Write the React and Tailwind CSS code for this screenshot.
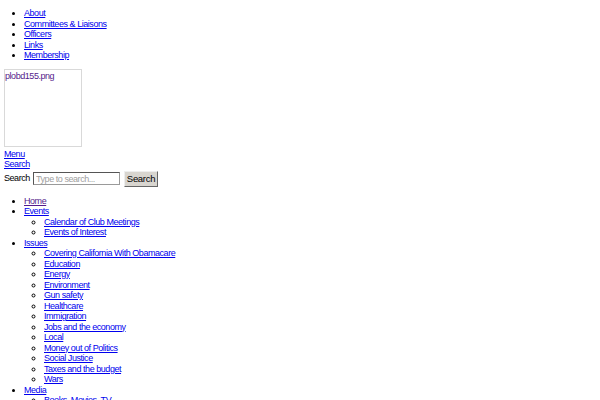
const topLinks = ["About", "Committees & Liaisons", "Officers", "Links", "Membership"];

const nav = [
  { label: "Home", visited: true },
  { label: "Events", children: ["Calendar of Club Meetings", "Events of Interest"] },
  {
    label: "Issues",
    children: [
      "Covering California With Obamacare",
      "Education",
      "Energy",
      "Environment",
      "Gun safety",
      "Healthcare",
      "Immigration",
      "Jobs and the economy",
      "Local",
      "Money out of Politics",
      "Social Justice",
      "Taxes and the budget",
      "Wars",
    ],
  },
  { label: "Media", children: ["Books, Movies, TV"] },
];

function A({ children, visited }) {
  return (
    <a href="#" className={visited ? "text-[#551a8b] underline" : "text-[#0000ee] underline"}>
      {children}
    </a>
  );
}

export default function App() {
  return (
    <div className="px-1 pt-2 bg-white text-black text-[9px] tracking-[-0.45px] leading-[10.5px] font-['Liberation_Sans',Arial,sans-serif] h-[400px] overflow-hidden">
      <ul className="list-disc pl-5">
        {topLinks.map((l) => (
          <li key={l}>
            <A>{l}</A>
          </li>
        ))}
      </ul>
      <div className="mt-[8px] w-[78px] h-[78px] border border-[#d9d9d9] text-[#551a8b] pt-[1px]">
        plobd155.png
      </div>
      <div className="mt-[2px]">
        <A>Menu</A>
      </div>
      <div>
        <A>Search</A>
      </div>
      <form className="flex items-center mt-[1px]" onSubmit={(e) => e.preventDefault()}>
        <label className="w-[29px]">Search</label>
        <input
          type="text"
          placeholder="Type to search..."
          className="w-[87px] h-[13px] px-[2px] border border-[#9a9a9a] border-t-[#555] border-l-[#555] text-[9px] tracking-[-0.45px] placeholder:text-[#a0a0a0] outline-none"
        />
        <button
          type="button"
          className="ml-[4px] h-[16px] w-[34px] bg-[#d8d5cf] border border-[#666] border-t-[#eee] border-l-[#eee] text-[9.5px] tracking-[-0.3px] leading-[14px]"
        >
          Search
        </button>
      </form>
      <ul className="list-disc pl-5 mt-[9px]">
        {nav.map((n) => (
          <li key={n.label}>
            <A visited={n.visited}>{n.label}</A>
            {n.children && (
              <ul className="list-[circle] pl-5">
                {n.children.map((c) => (
                  <li key={c}>
                    <A>{c}</A>
                  </li>
                ))}
              </ul>
            )}
          </li>
        ))}
      </ul>
    </div>
  );
}
